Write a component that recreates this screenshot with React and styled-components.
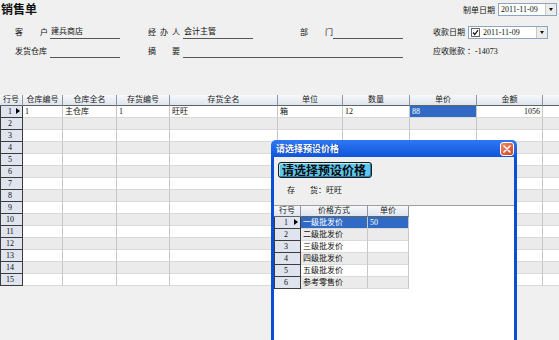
import React from 'react';
import styled, { createGlobalStyle } from 'styled-components';

const GlobalStyle = createGlobalStyle`
  html, body {
    margin: 0;
    padding: 0;
    background: #f0f0f0;
    overflow: hidden;
  }
  body {
    font-family: "Liberation Serif", "Noto Sans CJK SC", serif;
    font-size: 8px;
    color: #111;
  }
`;

// layout
const Page = styled.div`
  position: relative;
  width: 559px;
  height: 340px;
  overflow: hidden;
  background: #f0f0f0;
`;

const TopBar = styled.div`
  display: flex;
  justify-content: space-between;
  align-items: center;
  height: 18px;
`;

const Title = styled.h1`
  margin: 0 0 0 1px;
  font-family: "Noto Sans CJK SC", sans-serif;
  font-size: 12px;
  font-weight: 700;
  line-height: 18px;
  color: #111;
`;

const DateGroup = styled.div`
  display: flex;
  align-items: center;
  gap: 3px;
  margin-right: 2px;
`;

const Form = styled.div`
  display: grid;
  grid-template-columns: 15px 35px 70px 28px 35px 70px 47px 33px 70px 30px 35px 80px;
  grid-auto-rows: 14px;
  row-gap: 5px;
  margin-top: 8px;
`;

const Label = styled.span`
  grid-column: ${(p) => p.$col};
  grid-row: ${(p) => p.$row};
  width: ${(p) => p.$w || 33}px;
  height: 13px;
  line-height: 13px;
  text-align: justify;
  text-align-last: justify;
  white-space: nowrap;
`;

const Value = styled.span`
  grid-column: ${(p) => p.$col};
  grid-row: ${(p) => p.$row};
  height: 12px;
  line-height: 12px;
  padding-left: 1px;
  border-bottom: 1px solid #555;
`;

const Plain = styled.span`
  grid-column: ${(p) => p.$col};
  grid-row: ${(p) => p.$row};
  line-height: 13px;
  white-space: nowrap;
`;

const Picker = styled.div`
  grid-column: ${(p) => p.$col || 'auto'};
  grid-row: ${(p) => p.$row || 'auto'};
  display: flex;
  align-items: center;
  box-sizing: border-box;
  width: ${(p) => p.$w}px;
  height: 13px;
  background: #fff;
  border: 1px solid #8ea4bf;
  padding-left: 2px;
  line-height: 11px;
`;

const Check = styled.span`
  display: inline-flex;
  align-items: center;
  justify-content: center;
  width: 7px;
  height: 7px;
  border: 1px solid #666;
  margin-right: 3px;
  background: #fff;
`;

const DropBtn = styled.span`
  margin-left: auto;
  display: flex;
  align-items: center;
  justify-content: center;
  width: 10px;
  height: 11px;
  background: #ececec;
  border-left: 1px solid #c8c8c8;

  &::after {
    content: '';
    border-left: 2.5px solid transparent;
    border-right: 2.5px solid transparent;
    border-top: 3px solid #111;
  }
`;

// tables
const Grid = styled.div`
  margin-top: ${(p) => p.$top || 0}px;
  display: flex;
  flex-direction: column;
  background: ${(p) => p.$bg || 'transparent'};
`;

const Row = styled.div`
  display: flex;
  flex-shrink: 0;
`;

const HeadCell = styled.div`
  flex: 0 0 ${(p) => p.$w}px;
  box-sizing: border-box;
  height: 11px;
  line-height: 10px;
  text-align: center;
  background: linear-gradient(#f6f8fb, #dfe5ee);
  border-right: 1px solid #8f959e;
  border-bottom: 1px solid #626262;
  color: #222;
  white-space: nowrap;
  overflow: hidden;
`;

const RowHead = styled.div`
  flex: 0 0 ${(p) => p.$w}px;
  position: relative;
  box-sizing: border-box;
  height: 12px;
  line-height: 11px;
  text-align: center;
  padding-right: 3px;
  background: #dfe4ee;
  border: 1px solid #3c3c3c;
  border-top: none;
  color: #111;
`;

const Arrow = styled.span`
  position: absolute;
  right: 2px;
  top: 2px;
  border-top: 3.5px solid transparent;
  border-bottom: 3.5px solid transparent;
  border-left: 4px solid #000;
`;

const Cell = styled.div`
  flex: 0 0 ${(p) => p.$w}px;
  box-sizing: border-box;
  height: 12px;
  line-height: 11px;
  padding: 0 2px;
  text-align: ${(p) => p.$align || 'left'};
  white-space: nowrap;
  overflow: hidden;
  border-right: 1px solid #c6c6c6;
  border-bottom: 1px solid #dadada;
  background: ${(p) => (p.$sel ? '#316ac5' : p.$alt ? '#ebebeb' : '#fff')};
  color: ${(p) => (p.$sel ? '#fff' : '#111')};
`;

// dialog
const Dialog = styled.div`
  position: absolute;
  left: 271px;
  top: 140px;
  width: 246px;
  height: 220px;
  display: flex;
  flex-direction: column;
  border-radius: 5px 5px 0 0;
  background: linear-gradient(#2f78f4, #0a4fd6 20px, #0b4ed2);
`;

const TitleBar = styled.div`
  display: flex;
  align-items: center;
  justify-content: space-between;
  height: 17px;
  padding: 0 3px 0 5px;
`;

const TitleText = styled.span`
  font-family: "Noto Sans CJK SC", sans-serif;
  font-size: 9px;
  font-weight: 700;
  color: #fff;
  text-shadow: 1px 0 0 #0a3a9c;
`;

const CloseBtn = styled.span`
  display: flex;
  align-items: center;
  justify-content: center;
  box-sizing: border-box;
  width: 14px;
  height: 14px;
  border: 1px solid #fff;
  border-radius: 3px;
  background: linear-gradient(135deg, #f08a6c, #d2461f);
`;

const Body = styled.div`
  flex: 1;
  display: flex;
  flex-direction: column;
  margin: 0 3px;
  padding-top: 5px;
  background: #efefef;
`;

const BigLabel = styled.div`
  box-sizing: border-box;
  width: 94px;
  height: 16px;
  margin-left: 4px;
  padding-left: 3px;
  line-height: 14px;
  font-family: "Noto Sans CJK SC", sans-serif;
  font-size: 12px;
  font-weight: 700;
  color: #0a0a0a;
  background: #5cc8f0;
  border: 1px solid #1c1c1c;
  border-radius: 3px;
  box-shadow: inset -1px -1px 0 #2c7fa8, inset 1px 1px 0 #b9ebff;
  white-space: nowrap;
`;

const InfoRow = styled.div`
  display: flex;
  align-items: center;
  height: 12px;
  margin-top: 5px;
  padding-left: 13px;
`;

const InfoLabel = styled.span`
  width: 31px;
  text-align: justify;
  text-align-last: justify;
`;

const Panel = styled.div`
  flex: 1;
  margin-top: 10px;
  background: #fff;
  border-top: 1px solid #a0a0a0;
`;

const mainCols = [
  { title: '行号', w: 23 },
  { title: '仓库编号', w: 40 },
  { title: '仓库全名', w: 54 },
  { title: '存货编号', w: 53 },
  { title: '存货全名', w: 108 },
  { title: '单位', w: 65 },
  { title: '数量', w: 67 },
  { title: '单价', w: 67 },
  { title: '金额', w: 66, align: 'right' },
  { title: '', w: 40 },
];

const mainFirstRow = ['1', '主仓库', '1', '旺旺', '箱', '12', '88', '1056', ''];

const subCols = [
  { title: '行号', w: 27 },
  { title: '价格方式', w: 67 },
  { title: '单价', w: 41 },
];

const priceRows = [
  ['一级批发价', '50'],
  ['二级批发价', ''],
  ['三级批发价', ''],
  ['四级批发价', ''],
  ['五级批发价', ''],
  ['参考零售价', ''],
];

function DataGrid({ cols, rows, selRow, selCols }) {
  return (
    <>
      <Row>
        {cols.map((c, i) => (
          <HeadCell key={i} $w={c.w}>{c.title}</HeadCell>
        ))}
      </Row>
      {rows.map((r, ri) => (
        <Row key={ri}>
          <RowHead $w={cols[0].w}>
            {ri + 1}
            {ri === selRow && <Arrow />}
          </RowHead>
          {cols.slice(1).map((c, ci) => (
            <Cell
              key={ci}
              $w={c.w}
              $align={c.align}
              $alt={ri % 2 === 1}
              $sel={ri === selRow && selCols.includes(ci)}
            >
              {r[ci] || ''}
            </Cell>
          ))}
        </Row>
      ))}
    </>
  );
}

const mainRows = Array.from({ length: 15 }, (_, i) => (i === 0 ? mainFirstRow : []));

export default function App() {
  return (
    <Page>
      <GlobalStyle />
      <TopBar>
        <Title>销售单</Title>
        <DateGroup>
          <span>制单日期</span>
          <Picker $w={59}>
            2011-11-09
            <DropBtn />
          </Picker>
        </DateGroup>
      </TopBar>

      <Form>
        <Label $col={2} $row={1}>客户</Label>
        <Value $col={3} $row={1}>建兵商店</Value>
        <Label $col={5} $row={1} $w={32}>经办人</Label>
        <Value $col={6} $row={1}>会计主管</Value>
        <Label $col={8} $row={1}>部门</Label>
        <Value $col={9} $row={1} />
        <Label $col={11} $row={1} $w={32}>收款日期</Label>
        <Picker $col={12} $row={1} $w={80}>
          <Check>
            <svg width="7" height="7" viewBox="0 0 7 7">
              <path d="M1 3.5 L2.8 5.5 L6 1.2" fill="none" stroke="#111" strokeWidth="1.2" />
            </svg>
          </Check>
          2011-11-09
          <DropBtn />
        </Picker>

        <Label $col={2} $row={2} $w={32}>发货仓库</Label>
        <Value $col={3} $row={2} />
        <Label $col={5} $row={2} $w={32}>摘要</Label>
        <Value $col="6 / 10" $row={2} />
        <Plain $col="11 / 13" $row={2}>应收账款 ：-14073</Plain>
      </Form>

      <Grid $top={36}>
        <DataGrid cols={mainCols} rows={mainRows} selRow={0} selCols={[6]} />
      </Grid>

      <Dialog>
        <TitleBar>
          <TitleText>请选择预设价格</TitleText>
          <CloseBtn>
            <svg width="8" height="8" viewBox="0 0 8 8">
              <path d="M1 1 L7 7 M7 1 L1 7" stroke="#fff" strokeWidth="1.6" strokeLinecap="round" />
            </svg>
          </CloseBtn>
        </TitleBar>
        <Body>
          <BigLabel>请选择预设价格</BigLabel>
          <InfoRow>
            <InfoLabel>存货</InfoLabel>
            <span>：旺旺</span>
          </InfoRow>
          <Panel>
            <DataGrid cols={subCols} rows={priceRows} selRow={0} selCols={[0, 1]} />
          </Panel>
        </Body>
      </Dialog>
    </Page>
  );
}
